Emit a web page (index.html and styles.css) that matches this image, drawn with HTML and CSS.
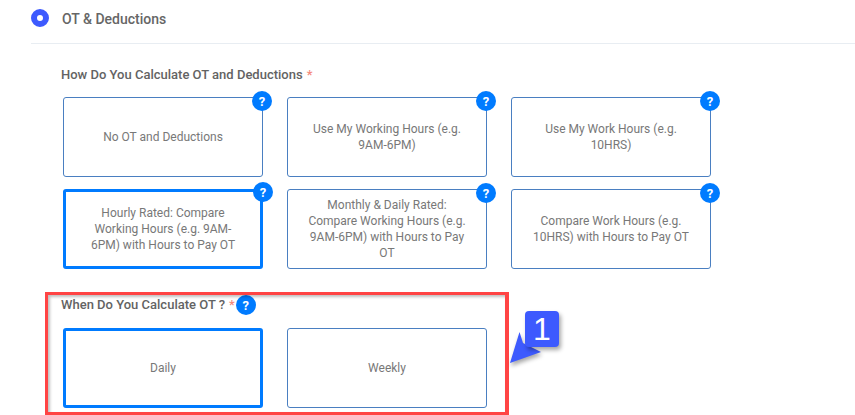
FILE: index.html
```html
<!DOCTYPE html>
<html lang="en">
<head>
<meta charset="utf-8">
<title>OT &amp; Deductions</title>
<link rel="stylesheet" href="styles.css">
</head>
<body>
<main class="page">
  <header class="section-head">
    <span class="radio"></span>
    <h2 class="section-title">OT &amp; Deductions</h2>
  </header>
  <section class="content">
    <div class="label label-first">How Do You Calculate OT and Deductions <span class="req">*</span></div>
    <div class="grid">
      <div class="card"><span>No OT and Deductions</span><span class="help help-card">?</span></div>
      <div class="card"><span>Use My Working Hours (e.g. 9AM-6PM)</span><span class="help help-card">?</span></div>
      <div class="card"><span>Use My Work Hours (e.g. 10HRS)</span><span class="help help-card">?</span></div>
      <div class="card selected"><span>Hourly Rated: Compare Working Hours (e.g. 9AM-6PM) with Hours to Pay OT</span><span class="help help-card">?</span></div>
      <div class="card"><span>Monthly &amp; Daily Rated: Compare Working Hours (e.g. 9AM-6PM) with Hours to Pay OT</span><span class="help help-card">?</span></div>
      <div class="card"><span>Compare Work Hours (e.g. 10HRS) with Hours to Pay OT</span><span class="help help-card">?</span></div>
    </div>
    <div class="label label-second">When Do You Calculate OT ? <span class="req">*</span><span class="help help-inline">?</span></div>
    <div class="grid">
      <div class="card selected"><span>Daily</span></div>
      <div class="card"><span>Weekly</span></div>
    </div>
  </section>
  <div class="highlight"></div>
  <div class="callout">
    <svg class="callout-arrow" width="34" height="32" viewBox="0 0 34 32" aria-hidden="true">
      <path d="M10.5 0 L14 11 L32 20 L1 31 Z" fill="#3d5afe"/>
    </svg>
    <div class="callout-badge">1</div>
  </div>
</main>
</body>
</html>
```
FILE: styles.css
```css
* { box-sizing: border-box; }
html, body { margin: 0; height: 100%; background: #fff; overflow: hidden; }
body { font-family: Roboto, "Liberation Sans", sans-serif; color: #616161; }
.page { position: relative; width: 855px; height: 415px; overflow: hidden; }
.section-head {
  display: flex; align-items: center; height: 44px; margin-left: 31px;
  padding-bottom: 8px; border-bottom: 1px solid #e8edf2;
}
.radio {
  width: 18px; height: 18px; border-radius: 50%;
  border: 6px solid #3d5afe; background: #fff; flex: none;
}
.section-title { margin: 2px 0 0 13px; font-size: 14px; font-weight: 500; color: #666; line-height: 18px; }
.content { padding-left: 61px; }
.label { font-size: 13px; font-weight: 500; color: #636363; line-height: 16px; display: flex; align-items: center; }
.label-first { margin-top: 23px; margin-bottom: 14px; }
.label-second { margin-top: 26px; margin-bottom: 13px; height: 20px; }
.req { color: #f58a7c; margin-left: 4px; }
.grid { display: grid; grid-template-columns: repeat(3, 200px); grid-auto-rows: 80px; gap: 12px 24px; margin-left: 2px; }
.card {
  position: relative; display: flex; align-items: center; justify-content: center;
  padding: 0 16px; border: 1px solid #4a7fc1; border-radius: 3px; background: #fff;
  font-size: 12px; line-height: 16px; color: #787878; text-align: center;
}
.card.selected { border: 3px solid #007bff; padding: 0 15px; }
.help {
  display: flex; align-items: center; justify-content: center;
  width: 20px; height: 20px; border-radius: 50%;
  background: #007bff; color: #fff; font-size: 13px; font-weight: 700; line-height: 1;
}
.help-card { position: absolute; top: -7px; right: -10px; }
.card.selected .help-card { top: -10px; right: -13px; }
.help-inline { margin-left: 1px; }
.highlight {
  position: absolute; left: 45px; top: 292px; width: 464px; height: 123px;
  border: 3px solid #ff4444; border-right-width: 4px; box-shadow: inset 2px 2px 3px rgba(0, 0, 0, .25);
  pointer-events: none;
}
.callout { position: absolute; left: 509px; top: 311px; width: 52px; height: 60px; }
.callout-arrow { position: absolute; left: 0; top: 21px; filter: drop-shadow(1px 3px 2px rgba(0,0,0,.35)); overflow: visible; }
.callout-badge {
  position: absolute; left: 16px; top: 0; width: 34px; height: 36px;
  border-radius: 4px; background: #3d5afe; color: #fff;
  font-family: "Liberation Sans", sans-serif; font-size: 32px; line-height: 36px; text-align: center;
  box-shadow: 2px 3px 4px rgba(0, 0, 0, .35);
}
```
